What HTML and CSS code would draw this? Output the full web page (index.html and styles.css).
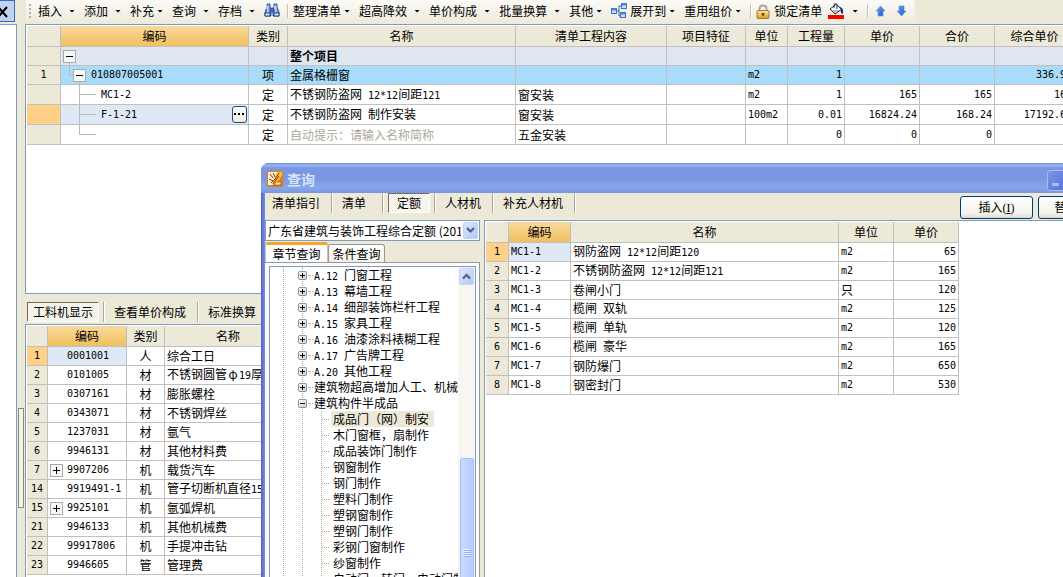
FILE: index.html
```
<!DOCTYPE html>
<html lang="zh-CN">
<head>
<meta charset="utf-8">
<title>查询</title>
<link rel="stylesheet" href="styles.css">
</head>
<body>
<svg class="defs" aria-hidden="true">
  <defs>
    <linearGradient id="blue" x1="0" y1="0" x2="1" y2="0"><stop offset="0" stop-color="#2d5fb8"/><stop offset=".5" stop-color="#b5d0f4"/><stop offset="1" stop-color="#274f9e"/></linearGradient>
    <linearGradient id="arrow" x1="0" y1="0" x2="1" y2="1"><stop offset="0" stop-color="#6fa5f2"/><stop offset="1" stop-color="#1c55c8"/></linearGradient>
    <linearGradient id="gold" x1="0" y1="0" x2="0" y2="1"><stop offset="0" stop-color="#ffe7a0"/><stop offset="1" stop-color="#d79a2b"/></linearGradient>
    <linearGradient id="box" x1="0" y1="0" x2="1" y2="1"><stop offset="0" stop-color="#fff"/><stop offset="1" stop-color="#d2cec0"/></linearGradient>
    <symbol id="plus" viewBox="0 0 16 16"><path d="M4.500 0V16M10 8.500H15" stroke="#aca899" stroke-dasharray="1 1"/><rect x=".5" y="4.500" width="8" height="8" rx="1" fill="url(#box)" stroke="#7898b5"/><path d="M2 8.500H7M4.500 6V11" stroke="#000"/></symbol>
    <symbol id="minus" viewBox="0 0 16 16"><path d="M4.500 0V16M10 8.500H15" stroke="#aca899" stroke-dasharray="1 1"/><rect x=".5" y="4.500" width="8" height="8" rx="1" fill="url(#box)" stroke="#7898b5"/><path d="M2 8.500H7" stroke="#000"/></symbol>
    <symbol id="leaf" viewBox="0 0 10 16"><path d="M.5 0V16M1 8.500H9" stroke="#aca899" stroke-dasharray="1 1"/></symbol>
    <symbol id="expand" viewBox="0 0 13 13"><rect x=".5" y=".5" width="12" height="12" fill="#f7f7f5" stroke="#aaa"/><path d="M3 6.500H10M6.500 3V10" stroke="#000"/></symbol>
  </defs>
</svg>
<div class="app">
  <aside class="dock">
    <button class="dock-close" aria-label="关闭"><svg width="15" height="22"><path d="M-2 6L7 16M7 6L-2 16" stroke="#000" stroke-width="2.200"/></svg></button>
    <div class="dock-body"></div>
    <div class="grip"></div>
  </aside>
  <main class="work">
    <nav class="toolbar">
      <span class="handle"></span>
      <button class="tool">插入<i class="caret"></i></button>
      <button class="tool">添加<i class="caret"></i></button>
      <button class="tool tight">补充<i class="caret"></i></button>
      <button class="tool">查询<i class="caret"></i></button>
      <button class="tool">存档<i class="caret"></i></button>
      <button class="icon" aria-label="查找"><svg width="16" height="16" viewBox="0 0 16 16"><g stroke="#1c418c" stroke-width=".8" fill="url(#blue)"><path d="M3 1H6V4L7 6V13H1V9L3 4Z"/><path d="M10 1H13V4L15 9V13H9V6L10 4Z"/><path d="M7 5H9V9H7Z"/></g><path d="M1 10H6V13H1ZM10 10H15V13H10Z" fill="#dbe9fb" stroke="#1c418c"/><path d="M3 3V6M11 3V6" stroke="#fff"/></svg></button>
      <span class="rule"></span>
      <button class="tool tight">整理清单<i class="caret"></i></button>
      <button class="tool">超高降效<i class="caret"></i></button>
      <button class="tool">单价构成<i class="caret"></i></button>
      <button class="tool">批量换算<i class="caret"></i></button>
      <button class="tool tight">其他<i class="caret"></i></button>
      <button class="tool tight"><svg width="16" height="16" viewBox="0 0 16 16"><path d="M6 8H8M8 3V13M8 3H10M8 13H10" stroke="#3b63b0" fill="none"/><g fill="#cfe0fb" stroke="#3f70cc"><rect x=".5" y="5.500" width="5" height="5"/><rect x="10.500" y=".5" width="5" height="5"/><rect x="9.500" y="9.500" width="5" height="5"/></g><path d="M1 6.500H5M11 1.500H15M10 10.500H14" stroke="#4c87e6" stroke-width="2"/></svg>展开到<i class="caret"></i></button>
      <button class="tool tight">重用组价<i class="caret"></i></button>
      <span class="rule"></span>
      <button class="tool lock"><svg width="14" height="15" viewBox="0 0 14 15"><path d="M3.500 8V4.500Q3.500 1.500 7 1.500T10.500 4.500V8" fill="none" stroke="#a9a9a0" stroke-width="2"/><rect x="1" y="6.500" width="12" height="8" rx="1" fill="url(#gold)" stroke="#a9762c"/><path d="M7 9V12M5.500 10H8.500" stroke="#70430b" stroke-width="1.500"/></svg>锁定清单</button>
      <button class="tool" aria-label="填充颜色"><svg width="17" height="17" viewBox="0 0 17 17"><path d="M2 6L8 1.500L14 6L7 11Z" fill="#fff" stroke="#222"/><path d="M4 7H12L7 10Z" fill="#a9b7cc"/><path d="M6 5V1.500Q7.500-.5 9 1.500V6" fill="none" stroke="#26306b"/><path d="M11 4Q16 4 15 11Q12 10 13 7Z" fill="#122b97"/><rect y="12" width="16" height="4" fill="red"/></svg><i class="caret"></i></button>
      <span class="rule"></span>
      <button class="icon move" aria-label="上移"><svg width="11" height="12" viewBox="0 0 11 12"><path d="M5.500 1L10 6H8V11H3V6H1Z" fill="url(#arrow)" stroke="#5f91e8" stroke-width=".6"/></svg></button>
      <button class="icon move" aria-label="下移"><svg width="11" height="12" viewBox="0 0 11 12"><path d="M5.500 11L10 6H8V1H3V6H1Z" fill="url(#arrow)" stroke="#5f91e8" stroke-width=".6"/></svg></button>
    </nav>

    <section class="pane main-pane">
      <table class="grid main-grid">
        <colgroup><col class="w34"><col class="w188"><col class="w39"><col class="w228"><col class="w151"><col class="w79"><col class="w42"><col class="w57"><col class="w75"><col class="w75"><col class="w80"></colgroup>
        <thead><tr><th></th><th class="hot">编码</th><th>类别</th><th>名称</th><th>清单工程内容</th><th>项目特征</th><th>单位</th><th>工程量</th><th>单价</th><th>合价</th><th>综合单价</th></tr></thead>
        <tbody>
          <tr class="total"><th></th><td class="code"><div class="node"><svg width="24" height="18"><path d="M8.500 15V18" stroke="#bbb"/><rect x="2.500" y="3.500" width="12" height="12" fill="#f7f7f5" stroke="#aaa"/><path d="M5 9.500H12" stroke="#000"/></svg></div></td><td></td><td><b>整个项目</b></td><td></td><td></td><td></td><td></td><td></td><td></td><td></td></tr>
          <tr class="current"><th>1</th><td class="code"><div class="node"><svg width="25" height="18"><path d="M8.500 0V9.500H12M18.500 15V18" fill="none" stroke="#aebcc6"/><rect x="12.500" y="3.500" width="12" height="12" fill="#f7f7f5" stroke="#aaa"/><path d="M15 9.500H22" stroke="#000"/></svg>010807005001</div></td><td class="mid">项</td><td>金属格栅窗</td><td></td><td></td><td class="num">m2</td><td class="num end">1</td><td></td><td></td><td class="num end">336.93</td></tr>
          <tr class="tall"><th></th><td class="code"><div class="node"><svg width="35" height="19"><path d="M18.500 0V19M18 9.500H35" stroke="#bbb"/></svg>MC1-2</div></td><td class="mid">定</td><td>不锈钢防盗网<span class="num"> 12*12</span>间距<span class="num">121</span></td><td>窗安装</td><td></td><td class="num">m2</td><td class="num end">1</td><td class="num end">165</td><td class="num end">165</td><td class="num end">165</td></tr>
          <tr class="tall"><th class="mark"></th><td class="code pick"><div class="node"><svg width="35" height="19"><path d="M18.500 0V19M18 9.500H35" stroke="#bbb"/></svg>F-1-21<button class="more" aria-label="选择"><svg width="11" height="3"><path d="M0 0H2V2H0ZM4 0H6V2H4ZM8 0H10V2H8Z"/></svg></button></div></td><td class="mid">定</td><td>不锈钢防盗网<span class="num"> </span>制作安装</td><td>窗安装</td><td></td><td class="num">100m2</td><td class="num end">0.01</td><td class="num end">16824.24</td><td class="num end">168.24</td><td class="num end">17192.65</td></tr>
          <tr class="tall"><th></th><td class="code"><div class="node"><svg width="35" height="19"><path d="M18.500 0V9.500H35" fill="none" stroke="#bbb"/></svg></div></td><td class="mid">定</td><td class="hint">自动提示：请输入名称简称</td><td>五金安装</td><td></td><td></td><td class="num end">0</td><td class="num end">0</td><td class="num end">0</td><td class="num end">0</td></tr>
        </tbody>
      </table>
    </section>

    <nav class="tabs lower-tabs">
      <button class="tab on">工料机显示</button><span class="rule"></span>
      <button class="tab">查看单价构成</button><span class="rule"></span>
      <button class="tab">标准换算</button>
    </nav>
    <section class="pane lower-pane">
      <table class="grid lower-grid">
        <colgroup><col class="w21"><col class="w79"><col class="w38"><col class="w127"></colgroup>
        <thead><tr><th></th><th class="hot">编码</th><th>类别</th><th>名称</th></tr></thead>
        <tbody>
          <tr><th class="mark">1</th><td class="code pick"><div class="item">0001001</div></td><td class="mid">人</td><td>综合工日</td></tr>
          <tr><th>2</th><td class="code"><div class="item">0101005</div></td><td class="mid">材</td><td>不锈钢圆管<span class="wide">φ</span><span class="num">19</span>厚</td></tr>
          <tr><th>3</th><td class="code"><div class="item">0307161</div></td><td class="mid">材</td><td>膨胀螺栓</td></tr>
          <tr><th>4</th><td class="code"><div class="item">0343071</div></td><td class="mid">材</td><td>不锈钢焊丝</td></tr>
          <tr><th>5</th><td class="code"><div class="item">1237031</div></td><td class="mid">材</td><td>氩气</td></tr>
          <tr><th>6</th><td class="code"><div class="item">9946131</div></td><td class="mid">材</td><td>其他材料费</td></tr>
          <tr><th>7</th><td class="code"><div class="item group"><svg width="13" height="13"><use href="#expand"/></svg>9907206</div></td><td class="mid">机</td><td>载货汽车</td></tr>
          <tr><th>14</th><td class="code"><div class="item">9919491-1</div></td><td class="mid">机</td><td>管子切断机直径<span class="num">15</span></td></tr>
          <tr><th>15</th><td class="code"><div class="item group"><svg width="13" height="13"><use href="#expand"/></svg>9925101</div></td><td class="mid">机</td><td>氩弧焊机</td></tr>
          <tr><th>21</th><td class="code"><div class="item">9946133</div></td><td class="mid">机</td><td>其他机械费</td></tr>
          <tr><th>22</th><td class="code"><div class="item">99917806</div></td><td class="mid">机</td><td>手提冲击钻</td></tr>
          <tr><th>23</th><td class="code"><div class="item">9946605</div></td><td class="mid">管</td><td>管理费</td></tr>
        </tbody>
      </table>
    </section>
  </main>
</div>

<div class="dialog" role="dialog" aria-labelledby="dialog-title">
  <header class="title">
    <svg width="16" height="16" viewBox="0 0 16 16"><rect width="16" height="16" fill="#d78014"/><path d="M1 1H11L6 14H1Z" fill="#fff4cf"/><path d="M10 1H15V4L9 14H5Z" fill="#ffc12e"/><path d="M3 3L6 7M6 2L8 6M2 8L6 10M4 12L8 8L12 2M6 13L12 5" stroke="#8b2b0a" fill="none"/><path d="M9 11H14V14H7Z" fill="#f9f1d8" stroke="#a33a0a" stroke-width=".7"/></svg>
    <h1 id="dialog-title">查询</h1>
    <button class="minimize" aria-label="最小化"></button>
  </header>
  <div class="client">
    <div class="bar">
      <nav class="tabs">
        <button class="tab">清单指引</button><span class="rule"></span>
        <button class="tab roomy">清单</button><span class="rule"></span>
        <button class="tab on">定额</button><span class="rule"></span>
        <button class="tab">人材机</button><span class="rule"></span>
        <button class="tab">补充人材机</button><span class="rule"></span>
      </nav>
      <div class="actions">
        <button class="push">插入<span class="key">(<u>I</u>)</span></button>
        <button class="push">替换<span class="key">(<u>R</u>)</span></button>
      </div>
    </div>
    <div class="split">
      <div class="side">
        <div class="combo">
          <select aria-label="定额库"><option>广东省建筑与装饰工程综合定额 (201</option></select>
          <span class="drop"><svg width="9" height="7"><path d="M1 1L4.500 4.500L8 1" fill="none" stroke="#4d6185" stroke-width="2.200"/></svg></span>
        </div>
        <div class="pages">
          <button class="page on">章节查询</button>
          <button class="page">条件查询</button>
        </div>
        <div class="page-body">
          <div class="tree-box">
            <ul class="tree">
              <li><i class="guide first"></i><svg class="knob"><use href="#plus"/></svg><span><span class="num">A.12 </span>门窗工程</span></li>
              <li><i class="guide first"></i><svg class="knob"><use href="#plus"/></svg><span><span class="num">A.13 </span>幕墙工程</span></li>
              <li><i class="guide first"></i><svg class="knob"><use href="#plus"/></svg><span><span class="num">A.14 </span>细部装饰栏杆工程</span></li>
              <li><i class="guide first"></i><svg class="knob"><use href="#plus"/></svg><span><span class="num">A.15 </span>家具工程</span></li>
              <li><i class="guide first"></i><svg class="knob"><use href="#plus"/></svg><span><span class="num">A.16 </span>油漆涂料裱糊工程</span></li>
              <li><i class="guide first"></i><svg class="knob"><use href="#plus"/></svg><span><span class="num">A.17 </span>广告牌工程</span></li>
              <li><i class="guide first"></i><svg class="knob"><use href="#plus"/></svg><span><span class="num">A.20 </span>其他工程</span></li>
              <li><i class="guide first"></i><svg class="knob"><use href="#plus"/></svg><span>建筑物超高增加人工、机械</span></li>
              <li><i class="guide first"></i><svg class="knob"><use href="#minus"/></svg><span>建筑构件半成品</span></li>
              <li><i class="guide"></i><i class="guide"></i><svg class="twig"><use href="#leaf"/></svg><span class="leaf chosen">成品门（网）制安</span></li>
              <li><i class="guide"></i><i class="guide"></i><svg class="twig"><use href="#leaf"/></svg><span class="leaf">木门窗框，扇制作</span></li>
              <li><i class="guide"></i><i class="guide"></i><svg class="twig"><use href="#leaf"/></svg><span class="leaf">成品装饰门制作</span></li>
              <li><i class="guide"></i><i class="guide"></i><svg class="twig"><use href="#leaf"/></svg><span class="leaf">钢窗制作</span></li>
              <li><i class="guide"></i><i class="guide"></i><svg class="twig"><use href="#leaf"/></svg><span class="leaf">钢门制作</span></li>
              <li><i class="guide"></i><i class="guide"></i><svg class="twig"><use href="#leaf"/></svg><span class="leaf">塑料门制作</span></li>
              <li><i class="guide"></i><i class="guide"></i><svg class="twig"><use href="#leaf"/></svg><span class="leaf">塑钢窗制作</span></li>
              <li><i class="guide"></i><i class="guide"></i><svg class="twig"><use href="#leaf"/></svg><span class="leaf">塑钢门制作</span></li>
              <li><i class="guide"></i><i class="guide"></i><svg class="twig"><use href="#leaf"/></svg><span class="leaf">彩钢门窗制作</span></li>
              <li><i class="guide"></i><i class="guide"></i><svg class="twig"><use href="#leaf"/></svg><span class="leaf">纱窗制作</span></li>
              <li><i class="guide"></i><i class="guide"></i><svg class="twig"><use href="#leaf"/></svg><span class="leaf">自动门、转门、电动门制作</span></li>
            </ul>
            <div class="scroll">
              <button class="drop up" aria-label="向上滚动"><svg width="9" height="7"><path d="M1 5.500L4.500 2L8 5.500" fill="none" stroke="#4d6185" stroke-width="2.200"/></svg></button>
              <div class="track"></div>
              <div class="thumb"><svg width="8" height="8"><path d="M0 .5H7M0 2.500H7M0 4.500H7M0 6.500H7" stroke="#eef4fe"/><path d="M1 1.500H8M1 3.500H8M1 5.500H8M1 7.500H8" stroke="#8cb0f8"/></svg></div>
            </div>
          </div>
        </div>
      </div>
      <div class="results">
        <table class="grid">
          <colgroup><col class="w23"><col class="w62"><col class="w268"><col class="w55"><col class="w65"></colgroup>
          <thead><tr><th></th><th class="hot">编码</th><th>名称</th><th>单位</th><th>单价</th></tr></thead>
          <tbody>
            <tr><th class="mark">1</th><td class="num pick">MC1-1</td><td>钢防盗网<span class="num"> 12*12</span>间距<span class="num">120</span></td><td class="num">m2</td><td class="num end">65</td></tr>
            <tr><th>2</th><td class="num">MC1-2</td><td>不锈钢防盗网<span class="num"> 12*12</span>间距<span class="num">121</span></td><td class="num">m2</td><td class="num end">165</td></tr>
            <tr><th>3</th><td class="num">MC1-3</td><td>卷闸小门</td><td>只</td><td class="num end">120</td></tr>
            <tr><th>4</th><td class="num">MC1-4</td><td>榄闸<span class="num"> </span>双轨</td><td class="num">m2</td><td class="num end">125</td></tr>
            <tr><th>5</th><td class="num">MC1-5</td><td>榄闸<span class="num"> </span>单轨</td><td class="num">m2</td><td class="num end">120</td></tr>
            <tr><th>6</th><td class="num">MC1-6</td><td>榄闸<span class="num"> </span>豪华</td><td class="num">m2</td><td class="num end">165</td></tr>
            <tr><th>7</th><td class="num">MC1-7</td><td>钢防爆门</td><td class="num">m2</td><td class="num end">650</td></tr>
            <tr><th>8</th><td class="num">MC1-8</td><td>钢密封门</td><td class="num">m2</td><td class="num end">530</td></tr>
          </tbody>
        </table>
      </div>
    </div>
  </div>
</div>
</body>
</html>
```
FILE: styles.css
```
* { box-sizing: border-box; }
html, body { height: 100%; }
body {
  margin: 0;
  overflow: hidden;
  position: relative;
  background: #ece9d8;
  color: #000;
  font: 12px/16px "Noto Sans CJK SC", sans-serif;
}
button, select { font: inherit; color: inherit; padding: 0; margin: 0; border: 0; background: none; white-space: nowrap; }
svg { display: block; flex: none; }
.defs { position: absolute; width: 0; height: 0; }

.app { display: flex; height: 100vh; }

/* left dock */
.dock { flex: none; width: 25px; display: grid; grid-template: 24px 1fr / 17px 8px; position: relative; }
.dock-close { grid-column: 1 / 3; width: 15px; height: 22px; background: #c1d2ee; border: 1px solid #316ac5; border-left: 0; overflow: hidden; }
.dock-body { background: #fff; border: 1px solid #7f9db9; border-left: 0; border-bottom: 0; }
.grip { position: absolute; right: 1px; top: 408px; width: 6px; height: 100px; background: #f4f2e8; border: 1px solid #8d8a7c; }

.work { flex: 1; min-width: 0; display: flex; flex-direction: column; }

/* toolbar */
.toolbar { flex: none; align-self: flex-start; display: flex; align-items: center; height: 24px; padding: 0 0 2px 3px; margin-left: 1px; background: linear-gradient(#fbfaf6, #edeadb); border-radius: 0 3px 3px 0; }
.handle { width: 2px; height: 14px; margin-right: 7px; background: repeating-linear-gradient(#b5b09c 0 2px, transparent 2px 4px); }
.tool { display: flex; align-items: center; gap: 7px; padding-right: 10px; flex: none; }
.tool.tight { gap: 3px; }
.tool.lock { gap: 4px; padding-right: 6px; }
.caret { width: 6px; height: 3px; margin-right: -1px; background: #000; clip-path: polygon(0 0, 100% 0, 50% 100%); }
.icon { flex: none; margin-right: 7px; }
.icon.move { margin: 0 8px 0 2px; }
.rule { flex: none; width: 2px; height: 14px; margin-right: 4px; border-left: 1px solid #c5c2b4; border-right: 1px solid #fff; }

/* panes and grids */
.pane { background: #fff; border: 1px solid #7f9db9; border-right: 0; padding: 1px 0 0 1px; overflow: hidden; }
.main-pane { flex: none; height: 270px; }
.lower-pane { flex: 1; min-height: 0; border-bottom: 0; }
.grid { border-collapse: separate; border-spacing: 0; table-layout: fixed; width: 0; }
.grid th, .grid td { height: 19px; padding: 0 2px; border: solid #c0c0c0; border-width: 0 1px 1px 0; line-height: 16px; white-space: nowrap; overflow: hidden; text-align: left; font-weight: 400; }
.grid th { background: #ece9d8; text-align: center; padding: 0; }
.grid thead th { height: 21px; }
.grid thead .hot { background: linear-gradient(#f9d89c, #f1c160); }
.grid tbody th, .grid .num, .num, .grid .code { font-family: "DejaVu Sans Mono", monospace; font-size: 10px; }
.num, .grid td.num { white-space: pre; }
.wide { display: inline-block; width: 12px; text-align: center; }
.grid tbody .mark { background: #ffd088; }
.grid td.mid { text-align: center; }
.grid td.end { text-align: right; }
.grid .tall td, .grid .tall th { height: 20px; }
.total td { background: #dfe6f0; }
.current td { background: #a9dcfb; }
.grid .pick { background: #dfe9f6; }
.grid .hint { color: #aca899; }
.grid td.code { padding: 0; }
.node { display: flex; align-items: center; gap: 5px; }
.more { margin-left: auto; margin-right: 1px; width: 15px; height: 17px; border: 1px solid #1c4f86; border-radius: 3px; background: linear-gradient(#fff, #ece9e0); display: grid; place-items: center; }
.item { padding-left: 19px; }
.item.group { display: flex; align-items: center; gap: 4px; padding-left: 2px; }

.w21 { width: 21px; } .w23 { width: 23px; } .w34 { width: 34px; } .w38 { width: 38px; }
.w39 { width: 39px; } .w42 { width: 42px; } .w55 { width: 55px; } .w57 { width: 57px; }
.w62 { width: 62px; } .w65 { width: 65px; } .w75 { width: 75px; } .w79 { width: 79px; }
.w80 { width: 80px; } .w127 { width: 127px; } .w151 { width: 151px; } .w188 { width: 188px; }
.w228 { width: 228px; } .w268 { width: 268px; }

/* flat tabs */
.tabs { display: flex; align-items: center; }
.tabs .rule { height: 20px; margin: 0; border-left-color: #aca899; }
.tab { height: 20px; padding: 0 11px 0 9px; line-height: 18px; }
.tab.roomy { padding-right: 16px; }
.tab.on { padding: 0 8px; margin: 0 4px; border: 1px solid; border-color: #6f6c60 #fff #fff #6f6c60; background: repeating-conic-gradient(#fff 0 25%, #ece9d8 0 50%) 0 0 / 2px 2px; }
.lower-tabs { flex: none; height: 30px; padding: 6px 0 0; overflow: hidden; }
.lower-tabs .tab.on { padding: 0 5px; margin: 0 4px 0 2px; }

/* query window */
.dialog { position: absolute; left: 261px; right: -56px; top: 163px; bottom: -40px; display: flex; flex-direction: column; padding: 0 4px; border-radius: 8px 8px 0 0; background: linear-gradient(90deg, #4d5fc6, #7c8fe4 4px); overflow: hidden; }
.title { flex: none; height: 30px; margin: 0 -4px; padding: 2px 4px 0 6px; display: flex; align-items: center; gap: 4px; background: linear-gradient(#6584d8 0, #9ab8f3 2px, #7c97e2 5px, #7b96e1 16px, #85a9ea 24px, #7b95e0 30px); }
.title h1 { margin: 0; font-size: 14px; line-height: 16px; font-weight: 700; color: #d9e4fb; }
.minimize { margin: 2px 47px 0 auto; width: 21px; height: 21px; border: 1px solid #a9bdf3; border-radius: 3px; background: linear-gradient(135deg, #7b95e6, #5471dc); position: relative; }
.minimize::after { content: ""; position: absolute; left: 4px; bottom: 4px; width: 7px; height: 3px; background: #a9bdf3; }
.client { flex: 1; min-height: 0; display: flex; flex-direction: column; background: #ece9d8; }
.bar { flex: none; height: 27px; display: flex; justify-content: space-between; align-items: flex-start; }
.client .tab:first-child { padding-left: 7px; }
.actions { display: flex; gap: 5px; padding: 3px 4px 0 0; }
.push { width: 73px; height: 23px; border: 1px solid #003c74; border-radius: 3px; background: linear-gradient(#fff, #f2f1ec 80%, #dcd7cb); }
.key { font: 12px/16px "Liberation Serif", serif; }
.split { flex: 1; min-height: 0; display: grid; grid-template-columns: 215px minmax(0, 1fr); column-gap: 4px; }
.side { display: flex; flex-direction: column; min-height: 0; }
.combo { flex: none; position: relative; height: 21px; border: 1px solid #7f9db9; background: #fff; }
.combo select { width: 100%; height: 19px; padding: 0 18px 0 2px; appearance: none; outline: 0; line-height: 16px; }
.drop { display: grid; place-items: center; flex: none; width: 15px; height: 17px; border-radius: 2px; background: linear-gradient(135deg, #dbe6fd, #b4c9f8); border: 1px solid #c4d3fa; }
.combo .drop { position: absolute; right: 1px; top: 1px; pointer-events: none; }
.pages { flex: none; display: flex; align-items: flex-end; height: 21px; padding-top: 1px; }
.page { width: 57px; height: 18px; line-height: 16px; border: 1px solid #919b9c; border-bottom: 0; border-radius: 3px 3px 0 0; background: linear-gradient(#fff, #f1efe6); }
.page.on { width: 63px; height: 20px; background: #fcfcfe; border-color: #c5c4bb; border-top: 3px solid #f5a42c; }
.page-body { flex: 1; min-height: 0; padding: 3px 3px 0 4px; background: #fcfcfe; border: 1px solid #919b9c; border-left: 0; }
.tree-box { height: 100%; display: flex; background: #fff; border: 1px solid #7f9db9; }
.tree { flex: 1; min-width: 0; margin: 0; padding: 0; list-style: none; overflow: hidden; }
.tree li { display: flex; height: 16px; padding-left: 13px; white-space: nowrap; }
.guide { flex: none; width: 19px; background: repeating-linear-gradient(#aca899 0 1px, transparent 1px 2px) 0 0 / 1px 100% no-repeat; }
.guide.first { width: 15px; }
.knob { width: 16px; height: 16px; }
.twig { width: 10px; height: 16px; }
.leaf { padding: 0 5px 0 2px; }
.chosen { background: #ece9d8; }
.scroll { flex: none; width: 17px; display: flex; flex-direction: column; align-items: center; background: #f7f6f1; padding-top: 1px; overflow: hidden; }
.track { flex: none; height: 173px; }
.thumb { flex: none; width: 14px; height: 190px; border-radius: 2px; border: 1px solid #a3bdf5; background: linear-gradient(90deg, #cbdafe, #b9cdfb); display: grid; place-items: center; }
.results { min-width: 0; padding: 1px 0 0 1px; background: #fff; border: 1px solid #7f9db9; border-bottom: 0; overflow: hidden; }
```
